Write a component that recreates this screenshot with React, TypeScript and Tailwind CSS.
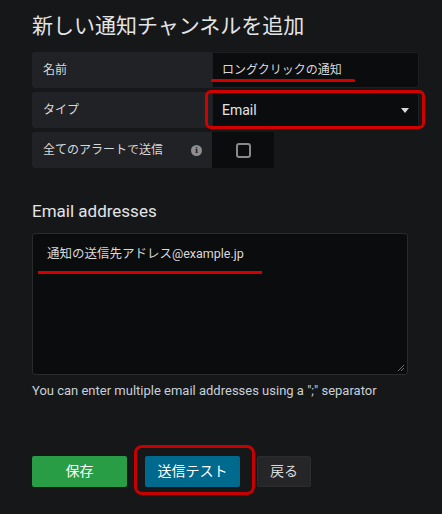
import React from "react";

const font = "font-['Roboto','Noto_Sans_CJK_JP',sans-serif]";

function LabelCell({ children }: { children: React.ReactNode }) {
  return (
    <div className="flex w-[180px] items-center justify-between rounded-l-[3px] bg-[#212226] pl-[11px] pr-[10px] text-[12px] text-[#d8d9da]">
      {children}
    </div>
  );
}

export default function App() {
  return (
    <div className={`h-[514px] w-[442px] bg-[#161719] pl-8 ${font}`}>
      <h1 className="pt-[11px] text-[21px] leading-[30px] text-[#e3e4e5]">
        新しい通知チャンネルを追加
      </h1>

      <div className="mt-[11px] flex flex-col gap-1">
        <div className="flex h-9">
          <LabelCell>名前</LabelCell>
          <div className="relative flex w-[207px] items-center rounded-r-[3px] border border-[#1e1f22] bg-[#0b0c0e] pl-[9px] text-[12px] text-[#d8d9da]">
            ロングクリックの通知
            <span className="absolute left-[-2px] top-[26px] h-[3px] w-[144px] rounded-full bg-[#d30000]" />
          </div>
        </div>

        <div className="flex h-9">
          <LabelCell>タイプ</LabelCell>
          <div className="relative flex w-[207px] items-center justify-between rounded-r-[3px] border border-[#1e1f22] bg-[#0b0c0e] pl-[9px] pr-[9px] text-[14px] text-[#e3e4e5]">
            Email
            <svg width="8" height="5" viewBox="0 0 8 5">
              <path d="M0 0h8L4 5z" fill="#d8d9da" />
            </svg>
            <span className="absolute left-[-8px] right-[-7px] top-[-3px] bottom-[-2px] rounded-[6px] border-[3px] border-[#d30000]" />
          </div>
        </div>

        <div className="flex h-9">
          <LabelCell>
            全てのアラートで送信
            <span className="flex h-[11px] w-[11px] items-center justify-center rounded-full bg-[#8e8e8e] text-[8px] font-bold leading-none text-[#212226] font-['DejaVu_Serif',serif]">
              i
            </span>
          </LabelCell>
          <div className="flex w-[62px] items-center justify-center bg-[#0b0c0e]">
            <span className="h-[15px] w-[15px] rounded-[3px] border-2 border-[#8a8a8a]" />
          </div>
        </div>
      </div>

      <h2 className="mt-[30px] text-[17px] leading-[26px] text-[#e3e4e5]">Email addresses</h2>

      <div className="relative mt-[9px] h-[142px] w-[376px] rounded-[3px] border border-[#2a2b2f] bg-[#0b0c0e] px-[14px] py-[11px] text-[12.5px] text-[#d8d9da]">
        通知の送信先アドレス@example.jp
        <span className="absolute left-[5px] top-[37px] h-[3px] w-[224px] bg-[#d30000]" />
        <svg className="absolute bottom-[2px] right-[2px]" width="8" height="8" viewBox="0 0 8 8">
          <path d="M7 1L1 7M7 4L4 7" stroke="#6e6f72" strokeWidth="1" />
        </svg>
      </div>

      <p className="mt-[6px] text-[13px] text-[#c7d0d9]">
        You can enter multiple email addresses using a ";" separator
      </p>

      <div className="mt-[55px] flex items-center text-[14px]">
        <button className="h-[31px] w-[95px] rounded-[2px] bg-[#299c46] text-white">保存</button>
        <div className="relative ml-[18px]">
          <button className="block h-[31px] w-[95px] rounded-[2px] bg-[#006a8e] text-white">送信テスト</button>
          <span className="absolute left-[-11px] right-[-15px] top-[-11px] bottom-[-8px] rounded-[8px] border-[3px] border-[#c80000]" />
        </div>
        <button className="ml-[17px] h-[31px] w-[54px] rounded-[2px] border border-[#2c2d30] bg-[#262628] text-[#d8d9da]">
          戻る
        </button>
      </div>
    </div>
  );
}
